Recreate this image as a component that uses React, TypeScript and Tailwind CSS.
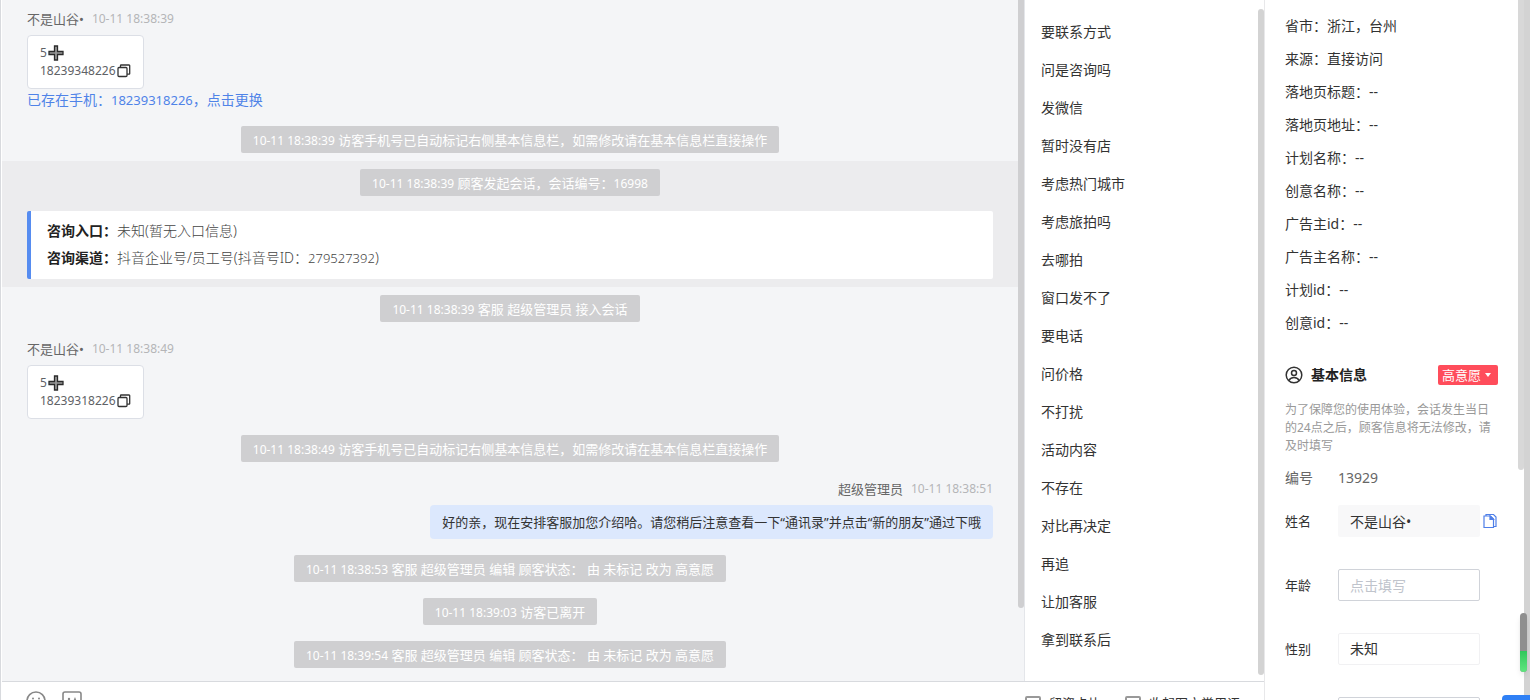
import { ReactNode } from 'react'

const quickGroups = [
  '要联系方式',
  '问是咨询吗',
  '发微信',
  '暂时没有店',
  '考虑热门城市',
  '考虑旅拍吗',
  '去哪拍',
  '窗口发不了',
  '要电话',
  '问价格',
  '不打扰',
  '活动内容',
  '不存在',
  '对比再决定',
  '再追',
  '让加客服',
  '拿到联系后',
]

const sourceInfo = [
  { label: '省市', value: '浙江，台州' },
  { label: '来源', value: '直接访问' },
  { label: '落地页标题', value: '--' },
  { label: '落地页地址', value: '--' },
  { label: '计划名称', value: '--' },
  { label: '创意名称', value: '--' },
  { label: '广告主id', value: '--' },
  { label: '广告主名称', value: '--' },
  { label: '计划id', value: '--' },
  { label: '创意id', value: '--' },
]

function CopyIcon() {
  return (
    <svg width="14" height="14" viewBox="0 0 14 14" fill="none" stroke="#333" strokeWidth="1.3">
      <rect x="1" y="3.5" width="9" height="9" rx="1" />
      <path d="M3.5 3.5V1.6a.6.6 0 0 1 .6-.6h8a.6.6 0 0 1 .6.6v8a.6.6 0 0 1-.6.6H10" />
    </svg>
  )
}

function PlusEmoji() {
  return (
    <svg width="16" height="16" viewBox="0 0 16 16" fill="#9a9a9a" stroke="#2b2b2b" strokeWidth="1.3">
      <path d="M6.5 1h3v5.5H15v3H9.5V15h-3V9.5H1v-3h5.5z" />
    </svg>
  )
}

function UserIcon() {
  return (
    <svg width="18" height="18" viewBox="0 0 18 18" fill="none" stroke="#333" strokeWidth="1.5">
      <circle cx="9" cy="9" r="7.8" />
      <circle cx="9" cy="7" r="2.5" />
      <path d="M3.8 14.6c1-2.2 2.9-3.1 5.2-3.1s4.2.9 5.2 3.1" />
    </svg>
  )
}

function PagesIcon() {
  return (
    <svg width="14" height="16" viewBox="0 0 14 16" fill="none" stroke="#4f7fe8" strokeWidth="1.2">
      <path d="M3 3V1.5h7.5L13 4v9.500h-2.500" />
      <path d="M1 3h6.500l3 3v8.500H1z" />
      <path d="M7 3v3.500h3.500z" fill="#4f7fe8" />
    </svg>
  )
}

function SmileIcon() {
  return (
    <svg width="20" height="20" viewBox="0 0 20 20" fill="none" stroke="#888" strokeWidth="1.6">
      <circle cx="10" cy="10" r="9" />
      <circle cx="7" cy="7.5" r="1" fill="#888" stroke="none" />
      <circle cx="13" cy="7.5" r="1" fill="#888" stroke="none" />
      <path d="M5.5 11.5a4.7 4.7 0 0 0 9 0" />
    </svg>
  )
}

function ImageIcon() {
  return (
    <svg width="20" height="20" viewBox="0 0 20 20" fill="none" stroke="#888" strokeWidth="1.6">
      <rect x="1" y="1" width="18" height="18" rx="2" />
      <circle cx="7" cy="8" r="1.2" fill="#888" stroke="none" />
      <path d="M3 16l5-5 2 2 3-7 4 10z" fill="#888" stroke="none" />
    </svg>
  )
}

function SystemTip({ time, children }: { time: string; children: ReactNode }) {
  return (
    <div className="flex justify-center">
      <p className="h-[27px] rounded-xs bg-[#cfcfd1] px-3 text-[13px] leading-[29px] text-white">
        <time className="text-xs">{time}</time> {children}
      </p>
    </div>
  )
}

function VisitorMessage({ time, phone, children }: { time: string; phone: string; children?: ReactNode }) {
  return (
    <div className="px-[25px] text-[13px]">
      <p className="flex gap-2 leading-[18px] text-[#666]">
        <span>不是山谷•</span>
        <time className="text-xs leading-[18px] text-[#b5b5b8]">{time}</time>
      </p>
      <div className="mt-[7px] inline-block rounded border border-[#dcdfe6] bg-white px-3 pt-2 pb-2 text-xs text-[#606266]">
        <p className="flex h-[18px] items-center gap-px">
          5<PlusEmoji />
        </p>
        <p className="flex h-[18px] items-center gap-px">
          {phone}
          <button type="button" aria-label="复制">
            <CopyIcon />
          </button>
        </p>
      </div>
      {children}
    </div>
  )
}

function ChatPanel() {
  return (
    <section className="flex min-w-0 flex-1 bg-[#f4f5f7]">
      <div className="min-w-0 flex-1">
        <div className="pt-[10px]">
          <VisitorMessage time="10-11 18:38:39" phone="18239348226">
            <p className="h-[22px] text-sm leading-[22px] text-[#4f83e8]">
              已存在手机：<span className="text-[13px]">18239318226</span>，<a href="#">点击更换</a>
            </p>
          </VisitorMessage>
        </div>
        <div className="pt-[15px] pb-2">
          <SystemTip time="10-11 18:38:39">访客手机号已自动标记右侧基本信息栏，如需修改请在基本信息栏直接操作</SystemTip>
        </div>

        <div className="bg-[#ececee] pt-2 pb-2">
          <SystemTip time="10-11 18:38:39">
            顾客发起会话，会话编号：<span className="text-xs">16998</span>
          </SystemTip>
          <div className="mt-[15px] mr-[25px] ml-[25px] rounded-xs border-l-4 border-[#568cf0] bg-white px-4 pt-[6px] pb-2 text-sm leading-[27px] font-light text-[#444]">
            <p className="h-[27px]">
              <b className="font-bold text-[#222]">咨询入口：</b>未知(暂无入口信息)
            </p>
            <p className="h-[27px]">
              <b className="font-bold text-[#222]">咨询渠道：</b>抖音企业号/员工号(抖音号ID：
              <span className="text-[13px]">279527392</span>)
            </p>
          </div>
        </div>

        <div className="pt-2">
          <SystemTip time="10-11 18:38:39">客服 超级管理员 接入会话</SystemTip>
        </div>
        <div className="pt-[18px]">
          <VisitorMessage time="10-11 18:38:49" phone="18239318226" />
        </div>
        <div className="pt-4">
          <SystemTip time="10-11 18:38:49">访客手机号已自动标记右侧基本信息栏，如需修改请在基本信息栏直接操作</SystemTip>
        </div>

        <div className="flex flex-col items-end px-[25px] pt-[18px] text-[13px]">
          <p className="flex gap-2 leading-[18px] text-[#666]">
            <span>超级管理员</span>
            <time className="text-xs leading-[18px] text-[#b5b5b8]">10-11 18:38:51</time>
          </p>
          <p className="mt-[7px] h-[34px] rounded bg-[#dce8fd] px-3 leading-[34px] text-[#333]">
            好的亲，现在安排客服加您介绍哈。请您稍后注意查看一下“通讯录”并点击“新的朋友”通过下哦
          </p>
        </div>

        <div className="flex flex-col gap-4 pt-4">
          <SystemTip time="10-11 18:38:53">客服 超级管理员 编辑 顾客状态： 由 未标记 改为 高意愿</SystemTip>
          <SystemTip time="10-11 18:39:03">访客已离开</SystemTip>
          <SystemTip time="10-11 18:39:54">客服 超级管理员 编辑 顾客状态： 由 未标记 改为 高意愿</SystemTip>
        </div>
      </div>
      <div className="h-[608px] w-[6px] rounded-b-full bg-[#cfcfd1]" />
    </section>
  )
}

function QuickReplyPanel() {
  return (
    <aside className="flex w-[240px] shrink-0 border-l border-[#e4e6ea] bg-white">
      <ul className="flex-1 pt-[13px] text-sm leading-[38px] text-[#333]">
        {quickGroups.map((name) => (
          <li key={name}>
            <button type="button" className="px-4">
              {name}
            </button>
          </li>
        ))}
      </ul>
      <div className="mt-[9px] mb-[6px] w-[6px] rounded-full bg-[#d3d3d3]" />
    </aside>
  )
}

function Composer() {
  return (
    <footer className="flex h-[19px] items-start justify-between overflow-hidden border-t border-[#d8dade] bg-white pt-[9px] pr-6 pl-6">
      <div className="flex gap-4">
        <button type="button" aria-label="表情">
          <SmileIcon />
        </button>
        <button type="button" aria-label="图片">
          <ImageIcon />
        </button>
      </div>
      <div className="flex gap-6 pt-[5px] text-[13px] leading-[14px] text-[#333]">
        <label className="flex gap-2">
          <input type="checkbox" className="h-4 w-4 appearance-none rounded-xs border-2 border-[#999]" />
          留资卡片
        </label>
        <label className="flex gap-2">
          <input type="checkbox" className="h-4 w-4 appearance-none rounded-xs border-2 border-[#999]" />
          收起图文常用语
        </label>
      </div>
    </footer>
  )
}

function CustomerPanel() {
  return (
    <aside className="flex w-[266px] shrink-0 border-l border-[#e8e8ea] bg-white text-sm text-[#333]">
      <div className="min-w-0 flex-1 pl-5">
        <dl className="pt-[9px] leading-[33px]">
          {sourceInfo.map((item) => (
            <div key={item.label} className="flex">
              <dt>{item.label}：</dt>
              <dd>{item.value}</dd>
            </div>
          ))}
        </dl>

        <div className="mt-[25px] mr-5 flex h-[22px] items-center">
          <UserIcon />
          <h2 className="ml-2 flex-1 font-bold text-[#222]">基本信息</h2>
          <button type="button" className="flex h-5 items-center gap-1 rounded-xs bg-[#ff4d5b] pr-[7px] pl-1 text-[13px] text-white">
            高意愿
            <svg width="6" height="4" viewBox="0 0 6 4" fill="#fff">
              <path d="M0 0h6L3 4z" />
            </svg>
          </button>
        </div>
        <p className="mt-[15px] mr-6 text-xs leading-[18px] text-[#999]">
          为了保障您的使用体验，会话发生当日的24点之后，顾客信息将无法修改，请及时填写
        </p>

        <div className="mt-3 flex h-[22px] items-center text-[#666]">
          <span className="w-[53px]">编号</span>
          <span>13929</span>
        </div>
        <div className="mt-4 flex flex-col gap-8 text-[13px]">
          <div className="flex h-8 items-center">
            <label htmlFor="name" className="w-[53px]">姓名</label>
            <input id="name" defaultValue="不是山谷•" className="h-8 w-[142px] rounded-xs bg-[#f8f8f9] px-3 text-sm" />
            <button type="button" aria-label="复制姓名" className="ml-[3px]">
              <PagesIcon />
            </button>
          </div>
          <div className="flex h-8 items-center">
            <label htmlFor="age" className="w-[53px]">年龄</label>
            <input id="age" placeholder="点击填写" className="h-8 w-[142px] rounded-xs border border-[#d0d3d9] px-[11px] text-sm placeholder:text-[#c0c4cc]" />
          </div>
          <div className="flex h-8 items-center">
            <label htmlFor="gender" className="w-[53px]">性别</label>
            <select id="gender" className="h-8 w-[142px] appearance-none rounded-xs border border-[#f1f1f3] px-[11px] text-sm">
              <option>未知</option>
            </select>
          </div>
          <input aria-label="电话" className="ml-[53px] h-8 w-[142px] rounded-xs border border-[#d0d3d9] px-[11px]" />
        </div>
      </div>
      <div className="h-[470px] w-[6px] rounded-b-full bg-[#d8d8d8]" />
      <div className="w-[6px] bg-[#d3d3d3]" />
    </aside>
  )
}

export default function App() {
  return (
    <main className="relative flex h-screen overflow-hidden bg-white font-['Noto_Sans','Noto_Sans_CJK_SC',sans-serif]">
      <div className="flex min-w-0 flex-1 flex-col border-l border-[#d8dade] pl-px">
        <div className="flex min-h-0 flex-1 overflow-hidden">
          <ChatPanel />
          <QuickReplyPanel />
        </div>
        <Composer />
      </div>
      <CustomerPanel />

      <div className="absolute right-[3px] bottom-7 flex h-[59px] w-[7px] flex-col overflow-hidden rounded-full bg-[#8f8f8f] shadow-md">
        <div className="mt-auto h-[21px] bg-linear-to-b from-[#2fc75c] to-[#5fe67f]" />
      </div>
      <div className="absolute right-0 bottom-0 h-[5px] w-7 rounded-tl bg-[#2f80f5]" />
    </main>
  )
}
